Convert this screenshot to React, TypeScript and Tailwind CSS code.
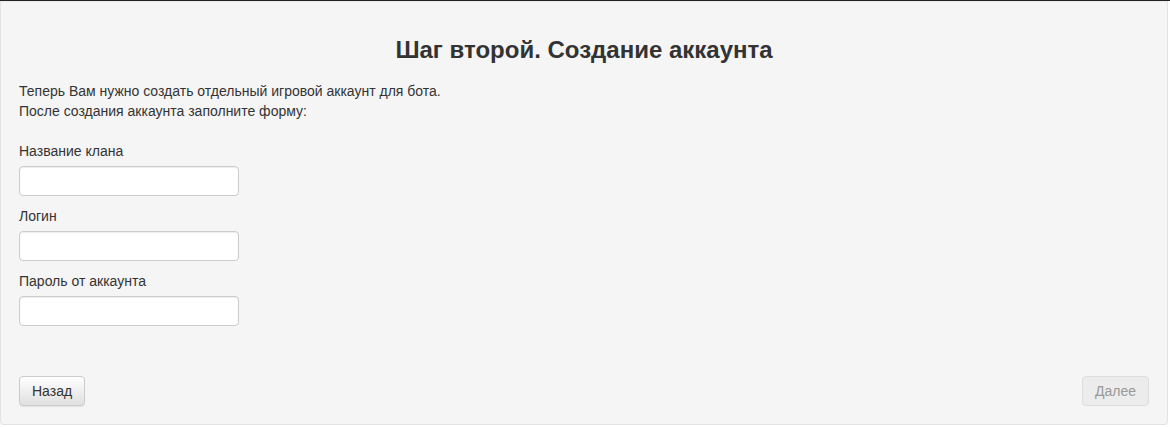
import { useState } from "react";

type Field = { name: string; label: string; type: string };

const fields: Field[] = [
  { name: "clan", label: "Название клана", type: "text" },
  { name: "login", label: "Логин", type: "text" },
  { name: "password", label: "Пароль от аккаунта", type: "password" },
];

export default function App() {
  const [values, setValues] = useState<Record<string, string>>({});
  const ready = fields.every((f) => (values[f.name] ?? "").trim() !== "");

  return (
    <div className="min-h-[427px] border-t border-[#222] bg-white font-['Liberation_Sans',Arial,sans-serif] text-[14px] leading-5 text-[#333]">
      <div className="mr-[2px] flex min-h-[424px] flex-col rounded-b-[4px] border border-t-0 border-[#e3e3e3] bg-[#f5f5f5] px-[18px] pb-[18px] pt-[36px] shadow-[inset_0_1px_1px_rgba(0,0,0,0.05)]">
        <h3 className="mb-[18px] text-center text-[24px] font-bold leading-[26px]">
          Шаг второй. Создание аккаунта
        </h3>
        <p>
          Теперь Вам нужно создать отдельный игровой аккаунт для бота.
          <br />
          После создания аккаунта заполните форму:
        </p>
        <div className="mt-5 flex flex-col gap-[10px]">
          {fields.map((f) => (
            <label key={f.name} className="flex flex-col">
              <span className="mb-[5px]">{f.label}</span>
              <input
                name={f.name}
                type={f.type}
                value={values[f.name] ?? ""}
                onChange={(e) => setValues({ ...values, [f.name]: e.target.value })}
                className="h-[30px] w-[220px] rounded-[4px] border border-[#ccc] bg-white px-3 text-[14px] shadow-[inset_0_1px_1px_rgba(0,0,0,0.075)] outline-none focus:border-[#66afe9]"
              />
            </label>
          ))}
        </div>
        <div className="mt-[50px] flex items-center justify-between">
          <button
            type="button"
            className="h-[30px] rounded-[4px] border border-[#ccc] bg-gradient-to-b from-white to-[#e0e0e0] px-3 text-[14px] text-[#333] shadow-[inset_0_1px_0_rgba(255,255,255,0.15),0_1px_1px_rgba(0,0,0,0.075)]"
          >
            Назад
          </button>
          <button
            type="button"
            disabled={!ready}
            className="h-[30px] rounded-[4px] border border-[#ccc] bg-gradient-to-b from-white to-[#e0e0e0] px-3 text-[14px] text-[#333] disabled:border-[#ddd] disabled:bg-none disabled:bg-[#ececec] disabled:text-[#999]"
          >
            Далее
          </button>
        </div>
      </div>
    </div>
  );
}
